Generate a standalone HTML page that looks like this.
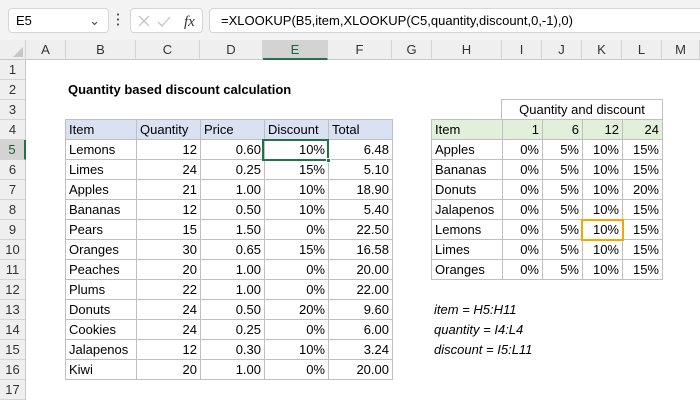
<!DOCTYPE html><html><head><style>
*{box-sizing:border-box;margin:0;padding:0}
body{width:700px;height:400px;overflow:hidden;background:#fff;font-family:"Liberation Sans",sans-serif;font-size:13px;color:#000;position:relative}
.tb{position:absolute;left:0;top:0;width:700px;height:40px;background:#f3f3f3}
.nb{position:absolute;left:8px;top:8px;width:101px;height:25px;background:#fff;border:1px solid #d6d6d6;border-radius:4px;line-height:23px;padding-left:7px}
.fx{position:absolute;left:130px;top:8px;width:73px;height:25px;background:#fff;border:1px solid #d6d6d6;border-radius:4px}
.fb{position:absolute;left:209px;top:8px;width:495px;height:25px;background:#fff;border:1px solid #d6d6d6;border-radius:4px;line-height:23px;padding-left:11px}
.ch{position:absolute;top:40px;height:20px;background:#efefef;border-right:1px solid #d4d4d4;border-bottom:1px solid #c8c8c8;text-align:center;line-height:19px;color:#333}
.rh{position:absolute;left:0;width:26px;height:20px;background:#efefef;border-bottom:1px solid #d4d4d4;border-right:1px solid #c8c8c8;text-align:center;line-height:20px;color:#333}
.g{position:absolute;display:grid;border-left:1px solid #bfbfbf;border-top:1px solid #bfbfbf}
.g div{height:20px;line-height:19px;border-right:1px solid #bfbfbf;border-bottom:1px solid #bfbfbf;padding:0 3px;text-align:right;white-space:nowrap}
.g div.l{text-align:left}
.t1 div.h{background:#d9e1f2}.t2 div.h{background:#e2efda}
.it{position:absolute;left:434px;font-style:italic;line-height:20px}
</style></head><body>
<div class="tb"></div>
<div class="nb">E5<span style="position:absolute;right:8px;top:0;color:#444">&#8964;</span></div>
<div style="position:absolute;left:117px;top:12px;width:2px;height:16px;background:radial-gradient(circle,#555 1px,transparent 1.2px) 0 0/2px 5px"></div>
<div class="fx"><svg width="73" height="25" style="position:absolute;left:0;top:0"><path d="M8 7l10 10M18 7L8 17" stroke="#c4c4c4" stroke-width="1.3" fill="none"/><path d="M27 13l4 4 8-9" stroke="#c4c4c4" stroke-width="1.3" fill="none"/><text x="53" y="17" font-family="Liberation Serif" font-style="italic" font-size="15" fill="#333">fx</text></svg></div>
<div class="fb">=XLOOKUP(B5,item,XLOOKUP(C5,quantity,discount,0,-1),0)</div>
<div class="ch" style="left:0;width:26px;background:#efefef"></div>
<svg style="position:absolute;left:12px;top:46px" width="12" height="12"><path d="M11 1V11H1Z" fill="#c8c8c8"/></svg>
<div class="ch" style="left:26px;width:40px">A</div><div class="ch" style="left:66px;width:70px">B</div><div class="ch" style="left:136px;width:64px">C</div><div class="ch" style="left:200px;width:63px">D</div><div class="ch" style="left:263px;width:65px;background:#d3d3d3;border-bottom:2px solid #217346;color:#1e5e3a">E</div><div class="ch" style="left:328px;width:64px">F</div><div class="ch" style="left:392px;width:40px">G</div><div class="ch" style="left:432px;width:70px">H</div><div class="ch" style="left:502px;width:40px">I</div><div class="ch" style="left:542px;width:40px">J</div><div class="ch" style="left:582px;width:40px">K</div><div class="ch" style="left:622px;width:40px">L</div><div class="ch" style="left:662px;width:38px">M</div>
<div class="rh" style="top:60px">1</div><div class="rh" style="top:80px">2</div><div class="rh" style="top:100px">3</div><div class="rh" style="top:120px">4</div><div class="rh" style="top:140px;background:#d3d3d3;border-right:2px solid #217346;color:#1e5e3a">5</div><div class="rh" style="top:160px">6</div><div class="rh" style="top:180px">7</div><div class="rh" style="top:200px">8</div><div class="rh" style="top:220px">9</div><div class="rh" style="top:240px">10</div><div class="rh" style="top:260px">11</div><div class="rh" style="top:280px">12</div><div class="rh" style="top:300px">13</div><div class="rh" style="top:320px">14</div><div class="rh" style="top:340px">15</div><div class="rh" style="top:360px">16</div><div class="rh" style="top:380px">17</div>
<div style="position:absolute;left:68px;top:80px;line-height:20px;font-weight:bold">Quantity based discount calculation</div>
<div class="g t1" style="left:65px;top:119px;grid-template-columns:71px 64px 64px 64px 64px">
<div class="l h">Item</div><div class="l h">Quantity</div><div class="l h">Price</div><div class="l h">Discount</div><div class="l h">Total</div>
<div class="l">Lemons</div><div>12</div><div>0.60</div><div>10%</div><div>6.48</div>
<div class="l">Limes</div><div>24</div><div>0.25</div><div>15%</div><div>5.10</div>
<div class="l">Apples</div><div>21</div><div>1.00</div><div>10%</div><div>18.90</div>
<div class="l">Bananas</div><div>12</div><div>0.50</div><div>10%</div><div>5.40</div>
<div class="l">Pears</div><div>15</div><div>1.50</div><div>0%</div><div>22.50</div>
<div class="l">Oranges</div><div>30</div><div>0.65</div><div>15%</div><div>16.58</div>
<div class="l">Peaches</div><div>20</div><div>1.00</div><div>0%</div><div>20.00</div>
<div class="l">Plums</div><div>22</div><div>1.00</div><div>0%</div><div>22.00</div>
<div class="l">Donuts</div><div>24</div><div>0.50</div><div>20%</div><div>9.60</div>
<div class="l">Cookies</div><div>24</div><div>0.25</div><div>0%</div><div>6.00</div>
<div class="l">Jalapenos</div><div>12</div><div>0.30</div><div>10%</div><div>3.24</div>
<div class="l">Kiwi</div><div>20</div><div>1.00</div><div>0%</div><div>20.00</div>
</div>
<div style="position:absolute;left:262px;top:139px;width:67px;height:22px;border:2px solid #217346"></div>
<div style="position:absolute;left:326px;top:158px;width:5px;height:5px;background:#217346;border:1px solid #fff"></div>
<div class="g" style="left:501px;top:99px;grid-template-columns:161px"><div style="text-align:center">Quantity and discount</div></div>
<div class="g t2" style="left:431px;top:119px;grid-template-columns:71px 40px 40px 40px 40px">
<div class="l h">Item</div><div class="h">1</div><div class="h">6</div><div class="h">12</div><div class="h">24</div>
<div class="l">Apples</div><div>0%</div><div>5%</div><div>10%</div><div>15%</div>
<div class="l">Bananas</div><div>0%</div><div>5%</div><div>10%</div><div>15%</div>
<div class="l">Donuts</div><div>0%</div><div>5%</div><div>10%</div><div>20%</div>
<div class="l">Jalapenos</div><div>0%</div><div>5%</div><div>10%</div><div>15%</div>
<div class="l">Lemons</div><div>0%</div><div>5%</div><div>10%</div><div>15%</div>
<div class="l">Limes</div><div>0%</div><div>5%</div><div>10%</div><div>15%</div>
<div class="l">Oranges</div><div>0%</div><div>5%</div><div>10%</div><div>15%</div>
</div>
<div style="position:absolute;left:581px;top:219px;width:43px;height:22px;border:2px solid #f4a700"></div>
<div class="it" style="top:300px">item = H5:H11</div>
<div class="it" style="top:320px">quantity = I4:L4</div>
<div class="it" style="top:340px">discount = I5:L11</div>
</body></html>
